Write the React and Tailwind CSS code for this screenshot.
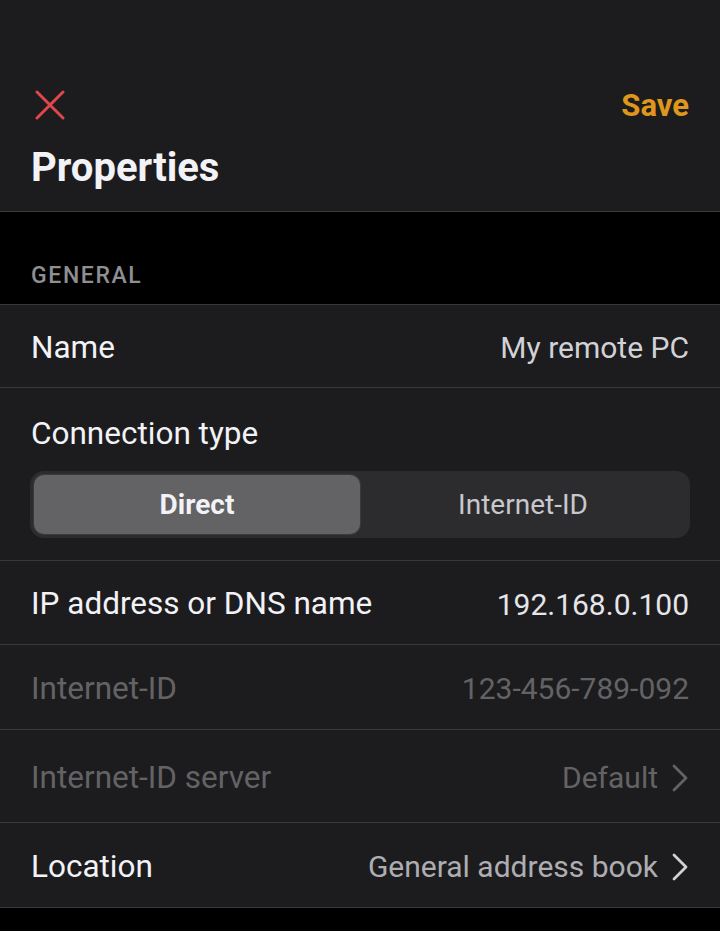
function Chevron({ className }) {
  return (
    <svg width="18" height="30" viewBox="0 0 18 30" fill="none" className={className}>
      <path d="M3 3 L15 15 L3 27" stroke="currentColor" strokeWidth="2.8" strokeLinecap="round" strokeLinejoin="round" />
    </svg>
  );
}

function Row({ label, value, height, dim, chevron, valueClass }) {
  return (
    <div className={`flex items-center justify-between px-[31px] pt-[3px] border-b border-[#38383a] ${height}`}>
      <span className={dim ? "text-[#636366]" : "text-[#f2f2f7]"}>{label}</span>
      <div className="flex items-center gap-[13px]">
        <span className={`text-[30px] ${valueClass}`}>{value}</span>
        {chevron && <Chevron className={dim ? "text-[#636366]" : "text-[#d1d1d6]"} />}
      </div>
    </div>
  );
}

export default function App() {
  return (
    <div className="w-[720px] h-[931px] bg-black font-['Roboto',sans-serif] overflow-hidden">
      {/* header */}
      <div className="h-[212px] bg-[#1c1c1e] border-b border-[#3a3a3c] px-[31px] pt-[85px]">
        <div className="flex items-center justify-between h-[40px]">
          <svg width="30" height="30" viewBox="0 0 30 30" className="text-[#e0474c] ml-[4px]">
            <path d="M2 2 L28 28 M28 2 L2 28" stroke="currentColor" strokeWidth="3" strokeLinecap="round" />
          </svg>
          <span className="text-[31px] font-bold text-[#de961c] leading-none">Save</span>
        </div>
        <h1 className="mt-[19px] text-[40px] leading-[48px] font-bold text-[#f2f2f7]">Properties</h1>
      </div>

      {/* section title */}
      <div className="h-[92px] px-[31px] pt-[52px]">
        <span className="text-[23px] leading-[24px] font-medium tracking-[0.07em] text-[#8e8e93]">GENERAL</span>
      </div>

      <div className="bg-[#1c1c1e] border-t border-[#38383a] text-[31.5px]">
        <Row label="Name" value="My remote PC" height="h-[83px]" valueClass="text-[#d1d1d6]" />

        <div className="h-[173px] border-b border-[#38383a] px-[30px] pt-[28px]">
          <div className="text-[#f2f2f7] leading-[36px] pl-[1px]">Connection type</div>
          <div className="mt-[19px] h-[67px] rounded-[14px] bg-[#2c2c2e] p-[4px] flex text-[28px]">
            <div className="flex-1 rounded-[10px] bg-[#636366] flex items-center justify-center font-bold text-[#f2f2f7] shadow-[0_0_0_1px_#3a3a3c]">
              Direct
            </div>
            <div className="flex-1 flex items-center justify-center text-[#c7c7cc]">Internet-ID</div>
          </div>
        </div>

        <Row label="IP address or DNS name" value="192.168.0.100" height="h-[84px]" valueClass="text-[#e5e5ea]" />
        <Row label="Internet-ID" value="123-456-789-092" height="h-[85px]" dim valueClass="text-[#636366]" />
        <Row label="Internet-ID server" value="Default" height="h-[93px]" dim chevron valueClass="text-[#636366]" />
        <Row label="Location" value="General address book" height="h-[85px]" chevron valueClass="text-[#aeaeb2]" />
      </div>
    </div>
  );
}
